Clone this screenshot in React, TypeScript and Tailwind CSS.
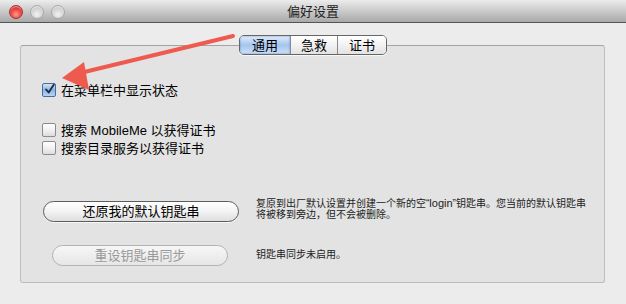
const font = { fontFamily: '"Liberation Sans", "Noto Sans CJK SC", sans-serif' };

type Tab = { label: string; width: string; active?: boolean };

const tabs: Tab[] = [
  { label: "通用", width: "w-[50px]", active: true },
  { label: "急救", width: "w-[47px]" },
  { label: "证书", width: "w-[49px]" },
];

function Light({ red }: { red?: boolean }) {
  return (
    <span
      className={
        red
          ? "h-[14px] w-[14px] rounded-full border border-[#a23030] bg-[radial-gradient(circle_at_50%_70%,#ff9a8e_0%,#ec3c36_55%,#b21e1e_100%)] shadow-[inset_0_1px_1px_rgba(255,255,255,0.6)]"
          : "h-[14px] w-[14px] rounded-full border border-[#a9a9a9] bg-[radial-gradient(circle_at_50%_70%,#f2f2f2_0%,#d0d0d0_60%,#b6b6b6_100%)] shadow-[inset_0_1px_1px_rgba(255,255,255,0.7)]"
      }
    />
  );
}

function Checkbox({ checked, label }: { checked?: boolean; label: string }) {
  return (
    <div className="flex h-[18px] items-center gap-[5px]">
      <span
        className={
          checked
            ? "flex h-[14px] w-[14px] items-center justify-center rounded-[2px] border border-[#4a6c9a] bg-gradient-to-b from-[#d5e4f6] via-[#8db3e3] to-[#b9d3f1]"
            : "h-[14px] w-[14px] rounded-[2px] border border-[#8c8c8c] bg-gradient-to-b from-white via-[#f1f1f1] to-[#dcdcdc]"
        }
      >
        {checked && (
          <svg width="13" height="13" viewBox="0 0 13 13" className="-mt-[2px] ml-[1px]">
            <path d="M2.5 6.5 L5.5 10 L11.5 1" fill="none" stroke="#1c2a45" strokeWidth="2.2" strokeLinecap="round" strokeLinejoin="round" />
          </svg>
        )}
      </span>
      <span className="text-[13px] leading-none text-black">{label}</span>
    </div>
  );
}

export default function App() {
  return (
    <div className="relative h-[304px] w-[626px] overflow-hidden bg-[#ececec]" style={font}>
      <div className="relative flex h-[23px] items-center border-b border-[#555] bg-gradient-to-b from-[#ececec] to-[#a9a9a9]">
        <div className="flex gap-[7px] pl-[9px] pt-[2px]">
          <Light red />
          <Light />
          <Light />
        </div>
        <div className="absolute inset-x-0 top-[4px] text-center text-[13px] leading-[16px] text-[#222]">偏好设置</div>
      </div>

      <div className="px-[20px] pt-[12px]">
        <div className="relative z-10 -mb-[10px] flex justify-center">
          <div className="flex h-[20px] overflow-hidden rounded-[5px] border border-[#666] shadow-[0_1px_1px_rgba(255,255,255,0.8)]">
            {tabs.map((t, i) => (
              <div
                key={t.label}
                className={
                  (t.active
                    ? "bg-gradient-to-b from-[#e4eefb] via-[#a4c5ee] to-[#cfe1f7] shadow-[inset_0_0_2px_rgba(60,110,190,0.8)] "
                    : "bg-gradient-to-b from-white via-[#f2f2f2] to-[#e2e2e2] ") +
                  (i > 0 ? "border-l border-[#8a8a8a] " : "") +
                  t.width +
                  " flex items-center justify-center text-[13px] leading-none text-black"
                }
              >
                {t.label}
              </div>
            ))}
          </div>
        </div>

        <div className="h-[238px] w-[585px] rounded-[3px] border border-[#bdbdbd] border-t-[#a3a3a3] bg-[#e3e3e3] pl-[21px] pt-[35px]">
          <Checkbox checked label="在菜单栏中显示状态" />
          <div className="mt-[22px]">
            <Checkbox label="搜索 MobileMe 以获得证书" />
            <Checkbox label="搜索目录服务以获得证书" />
          </div>

          <div className="mt-[44px] grid grid-cols-[214px_1fr] items-start">
            <button className="ml-[1px] h-[21px] w-[196px] rounded-full border border-[#5c5c5c] bg-gradient-to-b from-white via-[#f3f3f3] to-[#dedede] text-[13px] leading-none text-black shadow-[0_1px_0_rgba(255,255,255,0.7)]">
              还原我的默认钥匙串
            </button>
            <p className="-mt-[3px] text-[10px] leading-[11px] text-[#222]">
              复原到出厂默认设置并创建一个新的空“<span className="text-[11px]">login</span>”钥匙串。您当前的默认钥匙串
              <br />
              将被移到旁边，但不会被删除。
            </p>
          </div>

          <div className="mt-[23px] grid grid-cols-[214px_1fr] items-center">
            <button className="ml-[10px] h-[21px] w-[176px] rounded-full border border-[#b3b3b3] bg-gradient-to-b from-[#f7f7f7] to-[#e6e6e6] text-[13px] leading-none text-[#9a9a9a]">
              重设钥匙串同步
            </button>
            <p className="-mt-[3px] text-[10px] leading-[11px] text-[#222]">钥匙串同步未启用。</p>
          </div>
        </div>
      </div>

      <svg className="pointer-events-none absolute left-0 top-0" width="626" height="304">
        <line x1="233" y1="36" x2="76" y2="74" stroke="#ee5a4e" strokeWidth="4" strokeLinecap="round" />
        <polygon points="62,78 84,62 89,90" fill="#ee5a4e" />
      </svg>
    </div>
  );
}
